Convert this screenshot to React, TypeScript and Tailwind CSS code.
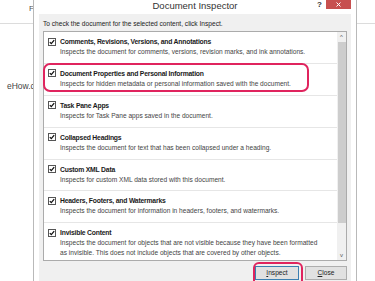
import React from "react";

const items = [
  {
    title: "Comments, Revisions, Versions, and Annotations",
    description:
      "Inspects the document for comments, versions, revision marks, and ink annotations.",
  },
  {
    title: "Document Properties and Personal Information",
    description:
      "Inspects for hidden metadata or personal information saved with the document.",
  },
  {
    title: "Task Pane Apps",
    description: "Inspects for Task Pane apps saved in the document.",
  },
  {
    title: "Collapsed Headings",
    description:
      "Inspects the document for text that has been collapsed under a heading.",
  },
  {
    title: "Custom XML Data",
    description: "Inspects for custom XML data stored with this document.",
  },
  {
    title: "Headers, Footers, and Watermarks",
    description:
      "Inspects the document for information in headers, footers, and watermarks.",
  },
  {
    title: "Invisible Content",
    description:
      "Inspects the document for objects that are not visible because they have been formatted as invisible. This does not include objects that are covered by other objects.",
  },
];

const CheckBox = () => (
  <svg width="8" height="8" viewBox="0 0 8 8" className="shrink-0 mt-[1.5px]">
    <rect x="0.5" y="0.5" width="7" height="7" fill="#fff" stroke="#555" />
    <path d="M1.8 4.1 L3.3 5.6 L6.2 2.2" fill="none" stroke="#111" strokeWidth="1.3" />
  </svg>
);

const InspectorItem = ({ title, description }: { title: string; description: string }) => (
  <div className="flex gap-[4px] pl-[4px] pr-[14px] pt-[4px] pb-[6.4px] border-b border-[#e6e6e6] last:border-b-0">
    <CheckBox />
    <div className="flex flex-col">
      <div className="text-[6.8px] leading-[11px] font-bold tracking-[-0.2px] text-[#1a1a1a]">{title}</div>
      <div className="text-[6.6px] leading-[9.5px] text-[#444]">{description}</div>
    </div>
  </div>
);

export default function App() {
  return (
    <div className="relative w-[375px] h-[281px] overflow-hidden bg-white font-['Liberation_Sans',sans-serif]">
      {/* page behind the dialog */}
      <div className="h-[24px] border-b border-[#dcdcdc] pl-[29px] pt-[3px] text-[8px] text-[#555]">File</div>
      <div className="pl-[7px] pt-[56px] text-[8.5px] text-[#444]">eHow.com</div>

      {/* dialog window */}
      <div className="absolute left-[33px] top-0 w-[324px] h-[281px] bg-white border-x border-[#b9b9b9] flex flex-col">
        <div className="relative h-[14px] flex items-start justify-center">
          <span className="text-[9.5px] leading-[12px] text-[#333]">Document Inspector</span>
          <span className="absolute left-[283px] top-[-1px] text-[8px] font-bold text-[#333]">?</span>
          <div className="absolute left-[292px] top-0 w-[25px] h-[9px] bg-[#c75050] flex items-center justify-center">
            <svg width="5" height="5" viewBox="0 0 5 5">
              <path d="M0.5 0.5 L4.5 4.5 M4.5 0.5 L0.5 4.5" stroke="#fff" strokeWidth="1" />
            </svg>
          </div>
        </div>

        <div className="flex-1 mx-[5px] bg-[#f0f0f0] px-[4px] flex flex-col">
          <div className="pt-[5px] text-[6.6px] leading-[10px] text-[#222]">
            To check the document for the selected content, click Inspect.
          </div>
          <div className="mt-[2px] h-[230px] border border-[#ababab] bg-white flex">
            <div className="flex-1 flex flex-col overflow-hidden">
              {items.map((item, i) => (
                <InspectorItem key={i} {...item} />
              ))}
            </div>
            <div className="w-[9px] flex flex-col items-center bg-[#f0f0f0]">
              <div className="h-[10px] flex items-center justify-center text-[6px] text-[#555]">^</div>
              <div className="w-[8px] h-[181px] bg-[#cdcdcd]" />
              <div className="flex-1" />
              <div className="h-[10px] flex items-center justify-center text-[6px] text-[#555]">v</div>
            </div>
          </div>
          <div className="mt-[5px] flex justify-end gap-[6px]">
            <button className="w-[44px] h-[14px] bg-[#e1e1e1] border border-[#3c7fb1] text-[6.6px] text-[#222]">
              <span className="underline">I</span>nspect
            </button>
            <button className="w-[42px] h-[14px] bg-[#e1e1e1] border border-[#adadad] text-[6.6px] text-[#222]">
              <span className="underline">C</span>lose
            </button>
          </div>
        </div>

        {/* highlight marks */}
        <div className="absolute left-[9px] top-[63px] w-[266px] h-[29px] rounded-[7px] border-2 border-[#e0245e]" />
        <div className="absolute left-[219px] top-[262px] w-[50px] h-[24px] rounded-[6px] border-2 border-[#e0245e]" />
      </div>
    </div>
  );
}
